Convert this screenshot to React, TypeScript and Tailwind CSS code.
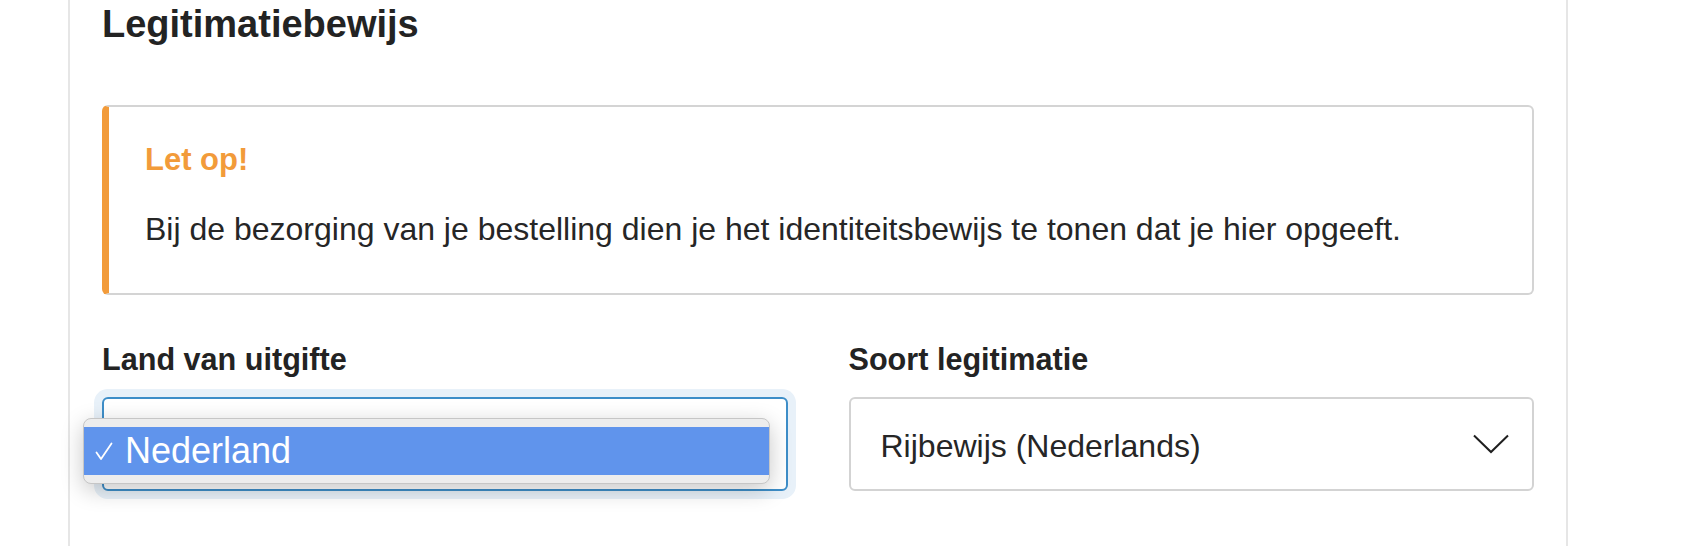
import React from 'react';

const FONT = { fontFamily: '"Liberation Sans", Arial, sans-serif' };

function Chevron() {
    return (
        <svg width="36" height="20" viewBox="0 0 36 20" fill="none">
            <path d="M1 1.5 L18 18 L35 1.5" stroke="#1f1f1f" strokeWidth="2" />
        </svg>
    );
}

function Check() {
    return (
        <svg width="18" height="19" viewBox="0 0 18 19" fill="none">
            <path d="M1.5 10.5 L6 17 L16.5 1.5" stroke="#ffffff" strokeWidth="1.8" strokeLinecap="round" strokeLinejoin="round" />
        </svg>
    );
}

export default function App() {
    return (
        <div className="w-[1686px] h-[546px] bg-white overflow-hidden text-[#222]" style={FONT}>
            <div className="ml-[68px] w-[1500px] h-full border-x-2 border-[#e6e6e6] px-8">
                <h2 className="pt-[1px] text-[38px] leading-[46px] font-bold text-[#232323]">Legitimatiebewijs</h2>

                {/* Notice */}
                <div className="mt-[58px] rounded-[6px] border-2 border-[#d4d4d4] border-l-[7px] border-l-[#f29b3a] pl-[36px] pt-[35px] pb-[46px]">
                    <p className="text-[31px] leading-[36px] font-bold text-[#f29b3a]">Let op!</p>
                    <p className="mt-[33px] text-[32px] leading-[36px] text-[#262626]">
                        Bij de bezorging van je bestelling dien je het identiteitsbewijs te tonen dat je hier opgeeft.
                    </p>
                </div>

                <div className="mt-[46px] grid grid-cols-2 gap-[61px]">
                    <div>
                        <label className="block text-[30.6px] leading-[36px] font-bold text-[#232323] mb-[20px]">Land van uitgifte</label>
                        <div className="relative h-[94px] rounded-[6px] border-2 border-[#3e8ec8] bg-white shadow-[0_0_0_8px_#e8f1f9]">
                            {/* open native menu */}
                            <div className="absolute left-[-21px] top-[19px] w-[687px] rounded-[8px] border border-[#c6c6c6] bg-[#ededed] py-[8px] shadow-[0_6px_22px_rgba(0,0,0,0.22)]">
                                <div className="flex items-center h-[48px] bg-[#6094ec] text-white">
                                    <span className="ml-[11px] mr-[12px] flex items-center"><Check /></span>
                                    <span className="text-[36px] leading-[48px]">Nederland</span>
                                </div>
                            </div>
                        </div>
                    </div>
                    <div>
                        <label className="block text-[30.6px] leading-[36px] font-bold text-[#232323] mb-[20px]">Soort legitimatie</label>
                        <div className="h-[94px] rounded-[6px] border-2 border-[#d3d3d3] bg-white flex items-center justify-between pl-[30px] pr-[23px]">
                            <span className="mt-[4px] text-[32px] leading-[36px] text-[#262626]">Rijbewijs (Nederlands)</span>
                            <Chevron />
                        </div>
                    </div>
                </div>
            </div>
        </div>
    );
}
